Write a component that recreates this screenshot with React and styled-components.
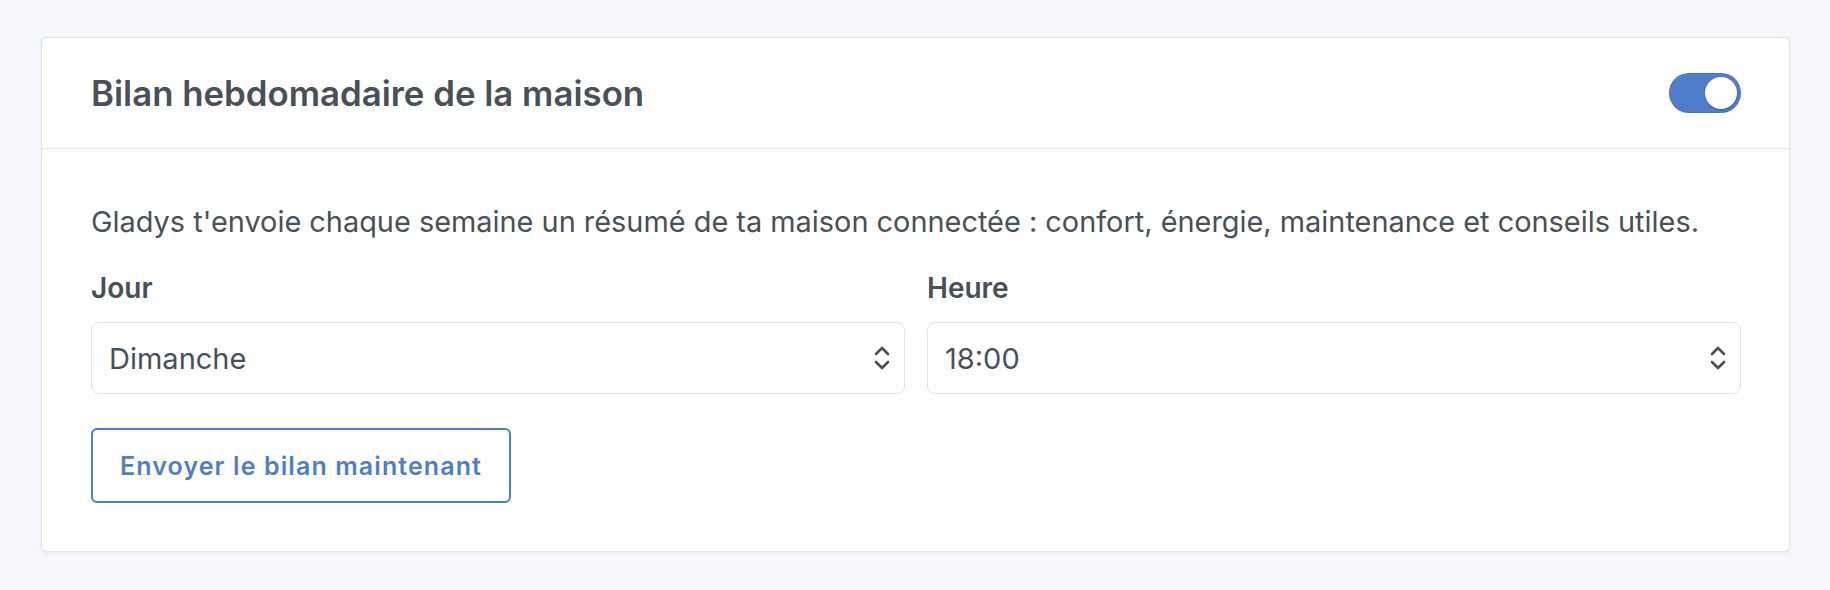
import styled, { createGlobalStyle } from 'styled-components'

const GlobalStyle = createGlobalStyle`
  html, body {
    margin: 0;
    background: #f5f7fb;
  }
  body {
    font-family: Inter, "Liberation Sans", sans-serif;
    color: #495057;
  }
`

const Page = styled.div`
  padding: 37px 40px 38px 41px;
`

const Card = styled.section`
  background: #fff;
  border: 1px solid #e0e5ec;
  border-radius: 6px;
  box-shadow: 0 1px 3px rgba(0, 20, 60, 0.06);
`

const CardHeader = styled.header`
  height: 110px;
  border-bottom: 1px solid #e0e5ec;
  padding: 0 48px 0 49px;
  display: flex;
  align-items: center;
  justify-content: space-between;
`

const Title = styled.h3`
  margin: 0;
  font-size: 34.8px;
  font-weight: 600;
  color: #495057;
`

const Switch = styled.button`
  width: 72px;
  height: 40px;
  border: none;
  border-radius: 20px;
  padding: 4px;
  background: ${p => (p.$on ? '#4f7ecb' : '#e9ecef')};
  display: flex;
  justify-content: ${p => (p.$on ? 'flex-end' : 'flex-start')};
  box-shadow: inset 0 0 0 1px rgba(0, 0, 0, 0.06);
  cursor: pointer;
`

const Knob = styled.span`
  width: 32px;
  height: 32px;
  border-radius: 50%;
  background: #fff;
  box-shadow: 0 1px 2px rgba(0, 0, 0, 0.3);
`

const CardBody = styled.div`
  padding: 52px 48px 48px 49px;
`

const Intro = styled.p`
  margin: 0 0 24px;
  font-size: 28.9px;
  line-height: 42px;
`

const Fields = styled.div`
  display: grid;
  grid-template-columns: 1fr 1fr;
  gap: 22px;
`

const Field = styled.label`
  display: flex;
  flex-direction: column;
`

const FieldLabel = styled.span`
  font-size: 28px;
  line-height: 42px;
  font-weight: 600;
  margin-bottom: 13px;
`

const SelectBox = styled.div`
  height: 72px;
  box-sizing: border-box;
  border: 1px solid #e0e5ec;
  border-radius: 8px;
  padding: 0 14px 0 17px;
  display: flex;
  align-items: center;
  justify-content: space-between;
  font-size: 29px;
`

const Button = styled.button`
  margin-top: 34px;
  height: 75px;
  padding: 0 27px;
  background: #fff;
  border: 2px solid #4f7ecb;
  border-radius: 6px;
  color: #4f7ecb;
  font-family: inherit;
  font-size: 25px;
  font-weight: 600;
  letter-spacing: 1.1px;
  cursor: pointer;
`

const Chevrons = () => (
  <svg width="16" height="24" viewBox="0 0 16 24" fill="none" stroke="#495057" strokeWidth="2.6" strokeLinecap="round" strokeLinejoin="round">
    <path d="M2 8 L8 2 L14 8" />
    <path d="M2 16 L8 22 L14 16" />
  </svg>
)

const Select = ({ value }) => (
  <SelectBox>
    <span>{value}</span>
    <Chevrons />
  </SelectBox>
)

export default function App() {
  return (
    <Page>
      <GlobalStyle />
      <Card>
        <CardHeader>
          <Title>Bilan hebdomadaire de la maison</Title>
          <Switch $on aria-label="Activer">
            <Knob />
          </Switch>
        </CardHeader>
        <CardBody>
          <Intro>
            Gladys t'envoie chaque semaine un résumé de ta maison connectée : confort, énergie, maintenance et conseils utiles.
          </Intro>
          <Fields>
            <Field>
              <FieldLabel>Jour</FieldLabel>
              <Select value="Dimanche" />
            </Field>
            <Field>
              <FieldLabel>Heure</FieldLabel>
              <Select value="18:00" />
            </Field>
          </Fields>
          <Button>Envoyer le bilan maintenant</Button>
        </CardBody>
      </Card>
    </Page>
  )
}
